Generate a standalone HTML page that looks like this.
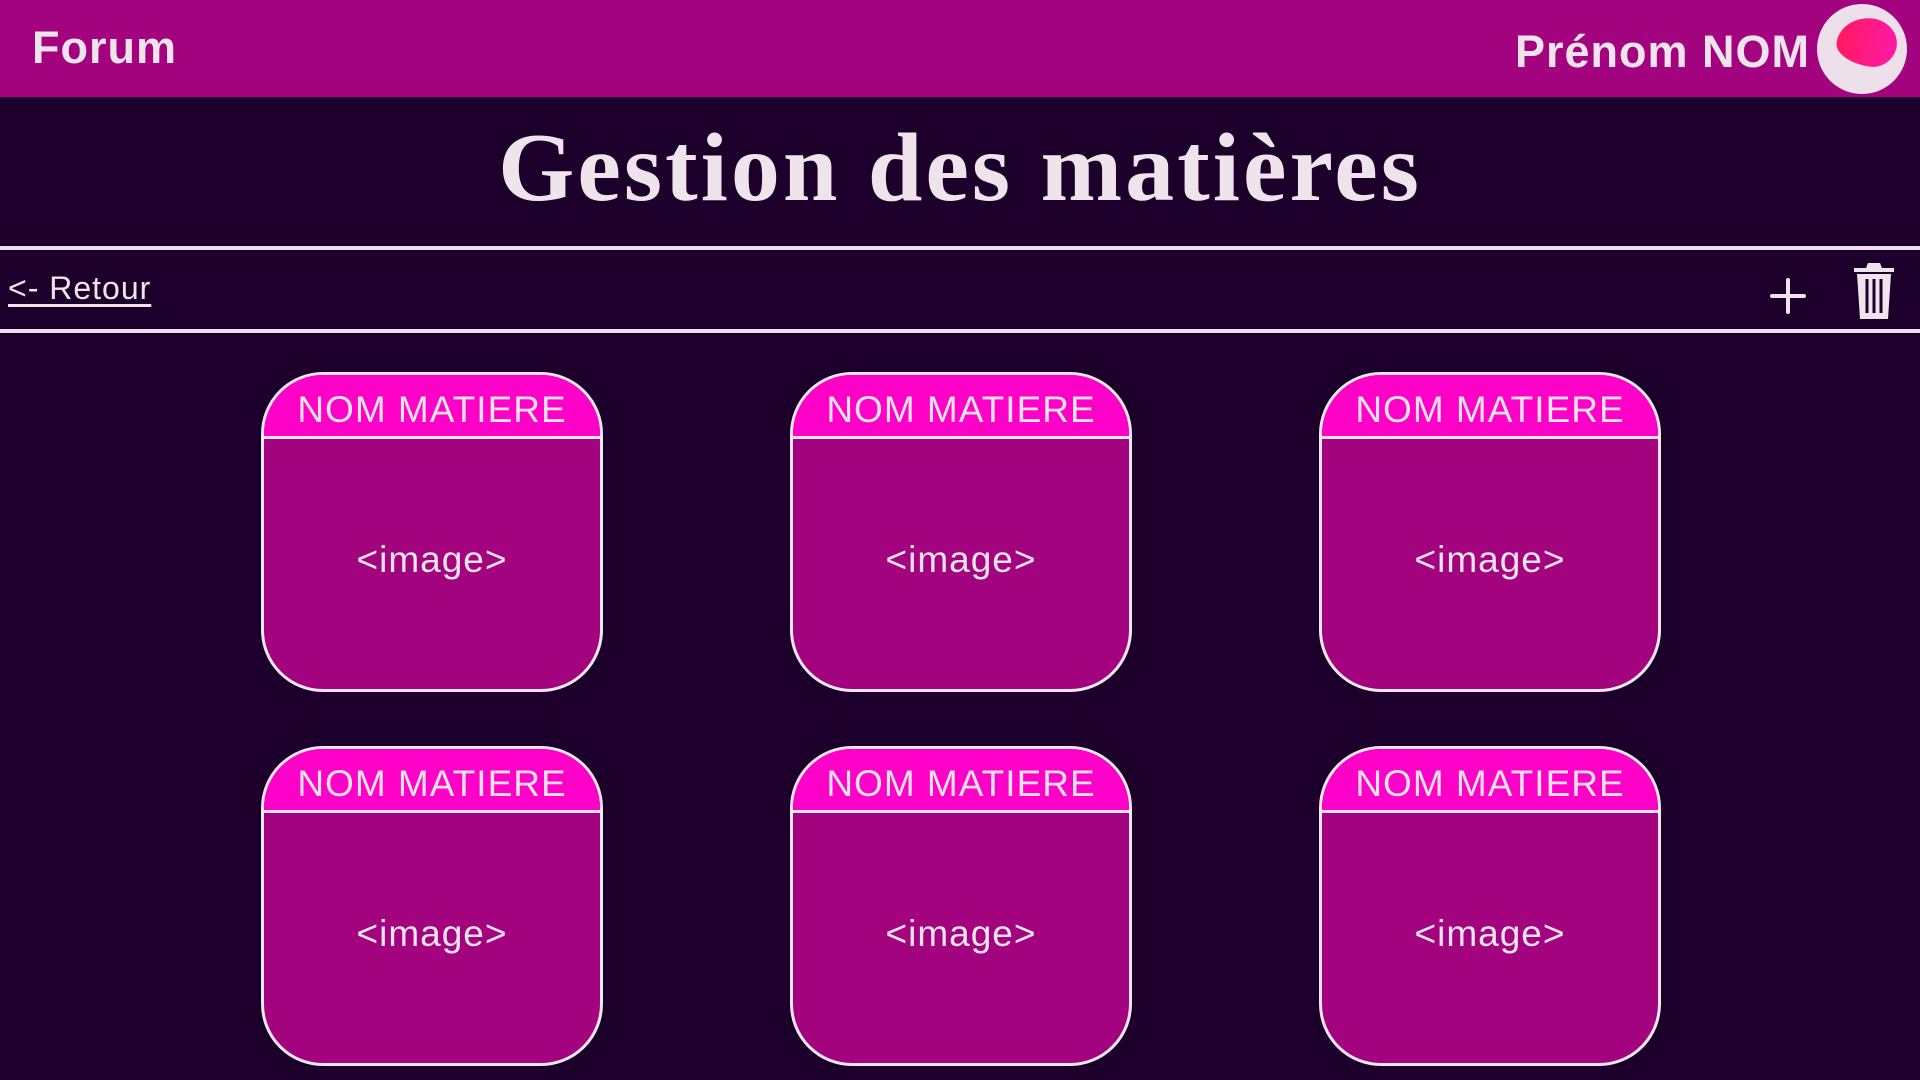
<!DOCTYPE html>
<html><head><meta charset="utf-8"><style>
*{margin:0;padding:0;box-sizing:border-box}
body{width:1920px;height:1080px;background:#1c002b;position:relative;overflow:hidden;font-family:"Liberation Sans",sans-serif;color:#efe3ec}
.hdr{position:absolute;left:0;top:0;width:1920px;height:97px;background:#a3037f}
.forum{position:absolute;left:32px;top:22px;font-size:45px;font-weight:bold;letter-spacing:1px}
.name{position:absolute;right:110px;top:26px;font-size:45px;font-weight:bold;letter-spacing:1px}
.av{position:absolute;left:1817px;top:4px;width:90px;height:90px;border-radius:50%;background:#ede0ea;overflow:hidden}
.blob{position:absolute;left:20px;top:14px;width:60px;height:48px;background:linear-gradient(90deg,#ff1a5e,#ff1aa8);border-radius:55% 45% 40% 60%/60% 50% 50% 40%;transform:rotate(8deg)}
h1{position:absolute;left:0;width:1920px;top:112px;text-align:center;font-family:"Liberation Serif",serif;font-weight:bold;font-size:98px;letter-spacing:3px}
.line{position:absolute;left:0;width:1920px;height:4px;background:#ede0ea}
.ret{position:absolute;left:8px;top:270px;font-size:32px;text-decoration:underline;text-underline-offset:5px;letter-spacing:1px}
.card{position:absolute;width:342px;height:320px;border:3px solid #f3e8f0;border-radius:62px;background:#a3037f;overflow:hidden}
.card .t{height:64px;background:#ff00c8;border-bottom:3px solid #f3e8f0;text-align:center;font-size:37px;line-height:70px;letter-spacing:1px}
.card .i{text-align:center;font-size:37px;margin-top:100px;letter-spacing:1px}
</style></head><body>
<div class="hdr"><div class="forum">Forum</div><div class="name">Prénom NOM</div>
<div class="av"><div class="blob"></div></div></div>
<h1>Gestion des matières</h1>
<div class="line" style="top:246px"></div>
<div class="line" style="top:329px"></div>
<div class="ret">&lt;- Retour</div>
<svg style="position:absolute;left:1769px;top:277px" width="38" height="38" viewBox="0 0 38 38"><path d="M19 3V35M3 19H35" stroke="#efe3ec" stroke-width="4" stroke-linecap="round"/></svg>
<svg style="position:absolute;left:1852px;top:261px" width="44" height="60" viewBox="0 0 44 60"><path d="M16 2h12l2 5h12v4H2V7h12z" fill="#efe3ec"/><path d="M5 13h34l-3 45H8z" fill="#efe3ec"/><path d="M15 18v34M22 18v34M29 18v34" stroke="#1c002b" stroke-width="3"/></svg>
<div class="card" style="left:261px;top:372px"><div class="t">NOM MATIERE</div><div class="i">&lt;image&gt;</div></div>
<div class="card" style="left:790px;top:372px"><div class="t">NOM MATIERE</div><div class="i">&lt;image&gt;</div></div>
<div class="card" style="left:1319px;top:372px"><div class="t">NOM MATIERE</div><div class="i">&lt;image&gt;</div></div>
<div class="card" style="left:261px;top:746px"><div class="t">NOM MATIERE</div><div class="i">&lt;image&gt;</div></div>
<div class="card" style="left:790px;top:746px"><div class="t">NOM MATIERE</div><div class="i">&lt;image&gt;</div></div>
<div class="card" style="left:1319px;top:746px"><div class="t">NOM MATIERE</div><div class="i">&lt;image&gt;</div></div>
</body></html>
